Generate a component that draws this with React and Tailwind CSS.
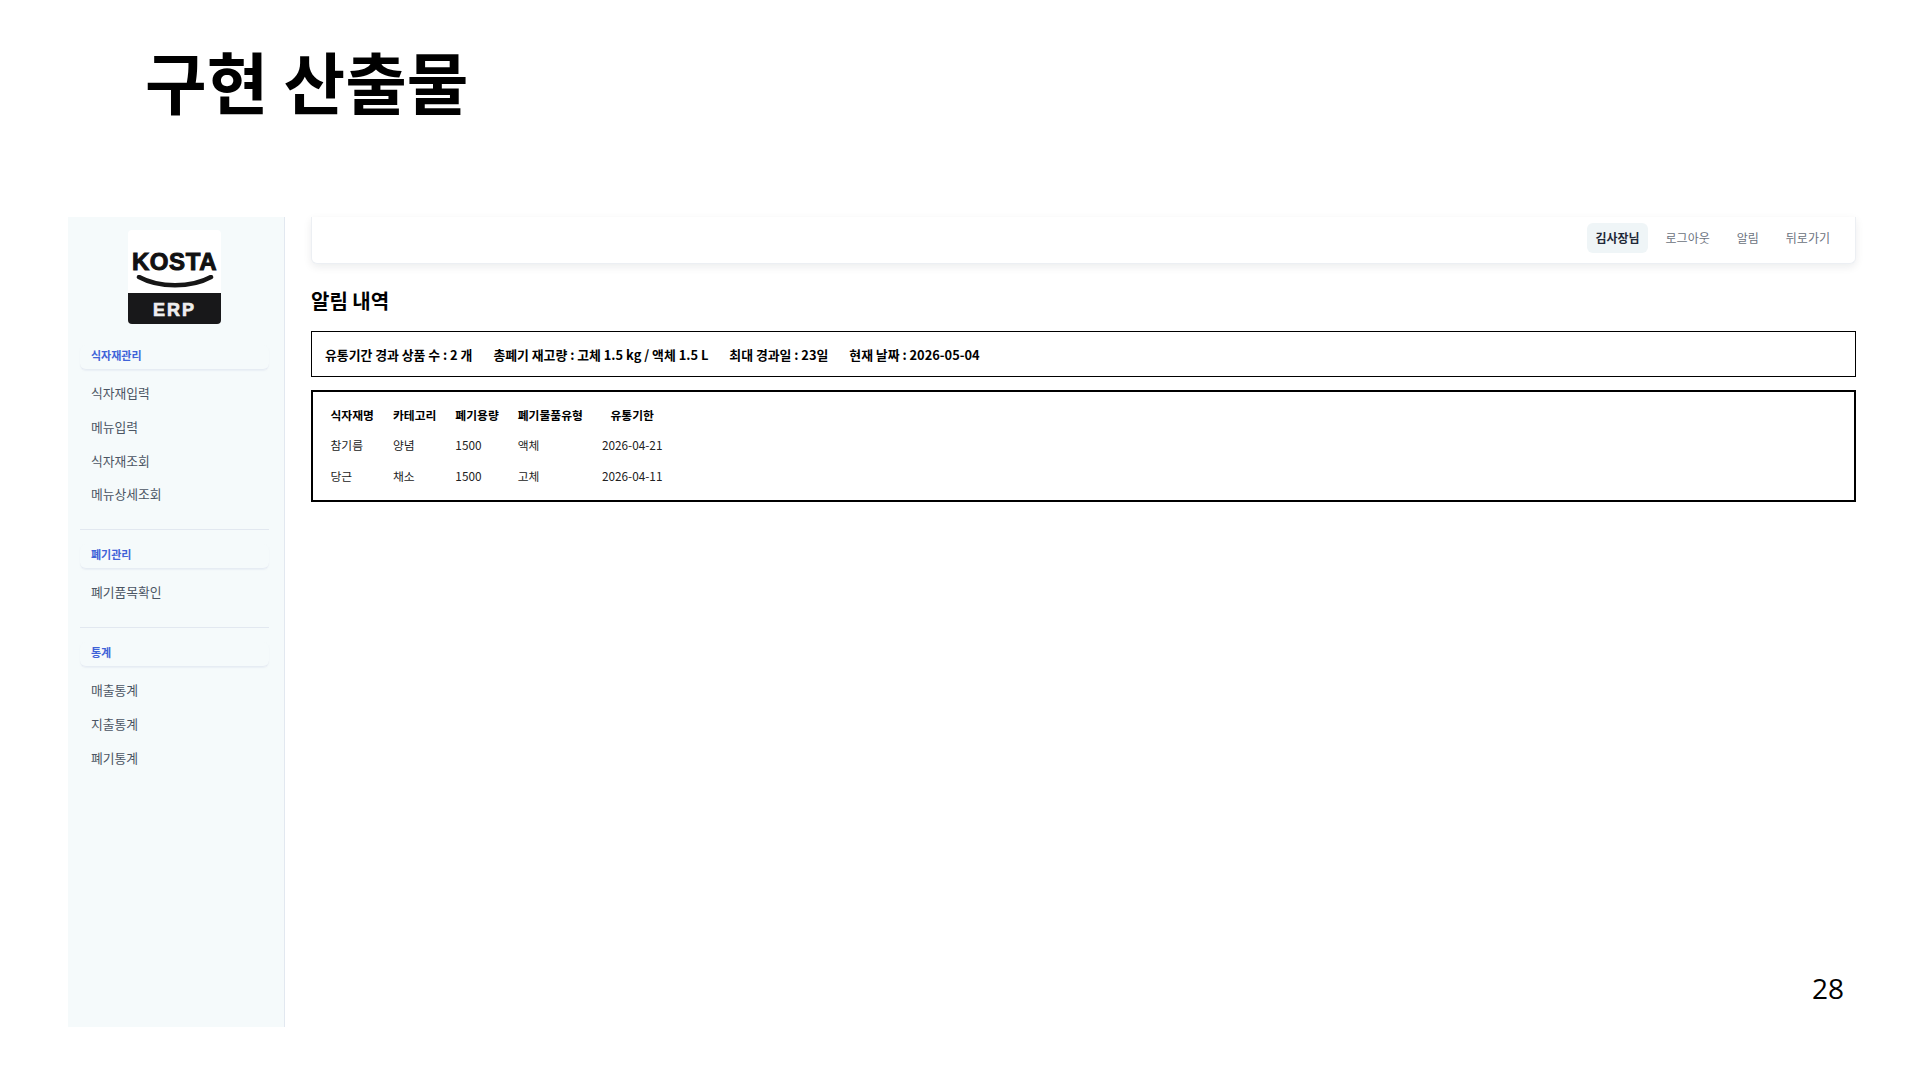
const font = { fontFamily: '"Noto Sans CJK KR", "Noto Sans", sans-serif' };

const sections = [
  { title: "식자재관리", items: ["식자재입력", "메뉴입력", "식자재조회", "메뉴상세조회"] },
  { title: "폐기관리", items: ["폐기품목확인"] },
  { title: "통계", items: ["매출통계", "지출통계", "폐기통계"] },
];

const rows = [
  ["참기름", "양념", "1500", "액체", "2026-04-21"],
  ["당근", "채소", "1500", "고체", "2026-04-11"],
];

function Logo() {
  return (
    <div className="w-[93px] h-[94px] rounded-[4px] overflow-hidden bg-white flex flex-col">
      <div className="h-[63px] flex flex-col items-center pt-[22px]">
        <span className="text-[24px] leading-[20px] font-bold text-[#111] tracking-[0.6px]" style={{ fontFamily: '"Liberation Sans", sans-serif', WebkitTextStroke: "1px #111" }}>KOSTA</span>
        <svg width="80" height="14" viewBox="0 0 80 14" className="mt-[3px]">
          <path d="M4 2 C 24 13, 56 13, 76 2" fill="none" stroke="#161616" strokeWidth="4.5" strokeLinecap="round" />
        </svg>
      </div>
      <div className="flex-1 bg-[#18181a] flex items-center justify-center pt-[2px]">
        <span className="text-[18px] leading-none font-bold text-[#eeeeee] tracking-[2px]" style={{ fontFamily: '"Liberation Sans", sans-serif', WebkitTextStroke: "0.7px #eee" }}>ERP</span>
      </div>
    </div>
  );
}

function Sidebar() {
  return (
    <aside className="w-[217px] h-[810px] bg-[#f5fafb] border-r border-[#e2e8f0] flex flex-col shrink-0 pt-[13px] pl-[12px] pr-[15px]">
      <div className="flex justify-center pb-[21px]"><Logo /></div>
      {sections.map((s, i) => (
        <div key={s.title} className={i > 0 ? "border-t border-[#e2e8f0] pt-[14px] mt-[18px]" : ""}>
          <div className="h-[25px] pl-[11px] text-[11px] leading-[20px] font-bold text-[#3f63d8] rounded-[6px] border-b border-[#e6ecf3] shadow-[0_1px_1px_rgba(226,232,240,0.5)]">{s.title}</div>
          <ul className="pt-[6px]">
            {s.items.map((it) => (
              <li key={it} className="h-[33.8px] pl-[11px] text-[12.8px] leading-[33.8px] text-[#4b5563]">{it}</li>
            ))}
          </ul>
        </div>
      ))}
    </aside>
  );
}

function TopBar() {
  return (
    <header className="h-[47px] pb-[5px] bg-white rounded-b-[6px] border-x border-b border-[#eceff3] shadow-[0_3px_8px_rgba(15,23,42,0.08)] flex items-center justify-end pr-[16px] text-[12px]">
      <span className="h-[30px] leading-[30px] px-[8px] rounded-[6px] bg-[#eff5f7] font-bold text-[#1f2937]">김사장님</span>
      <span className="px-[9px] ml-[9px] text-[#6b7280]">로그아웃</span>
      <span className="px-[9px] ml-[9px] text-[#6b7280]">알림</span>
      <span className="px-[9px] ml-[9px] text-[#6b7280]">뒤로가기</span>
    </header>
  );
}

export default function App() {
  return (
    <div className="relative w-[1920px] h-[1080px] bg-white overflow-hidden" style={font}>
      <h1 className="pl-[145px] pt-[32px] h-[217px] text-[67px] leading-[96px] font-bold text-black">구현 산출물</h1>
      <div className="flex pl-[68px] pr-[64px]">
        <Sidebar />
        <main className="flex-1 pl-[26px]">
          <TopBar />
          <h2 className="mt-[22px] text-[20px] leading-[30px] font-bold text-black">알림 내역</h2>
          <div className="mt-[15px] h-[46px] border border-black flex items-center gap-[21px] px-[13px] pt-[1px] text-[12.85px] font-bold text-black">
            <span>유통기간 경과 상품 수 : 2 개</span>
            <span>총폐기 재고량 : 고체 1.5 kg / 액체 1.5 L</span>
            <span>최대 경과일 : 23일</span>
            <span>현재 날짜 : 2026-05-04</span>
          </div>
          <div className="mt-[13px] h-[112px] border-2 border-black pl-[8px] pt-[7px]">
            <table className="text-[11.8px] text-black border-collapse">
              <thead>
                <tr className="h-[31px]">
                  {["식자재명", "카테고리", "폐기용량", "폐기물품유형", "유통기한"].map((h) => (
                    <th key={h} className="px-[9.5px] font-bold text-center">{h}</th>
                  ))}
                </tr>
              </thead>
              <tbody>
                {rows.map((r) => (
                  <tr key={r[0]} className="h-[30.5px] text-[#222]">
                    {r.map((c, j) => (
                      <td key={j} className="px-[9.5px]">{c}</td>
                    ))}
                  </tr>
                ))}
              </tbody>
            </table>
          </div>
        </main>
      </div>
      <div className="absolute left-[1812px] top-[970px] text-[28px] leading-[36px] text-black" style={{ fontFamily: '"Open Sans", "Noto Sans", sans-serif' }}>28</div>
    </div>
  );
}
